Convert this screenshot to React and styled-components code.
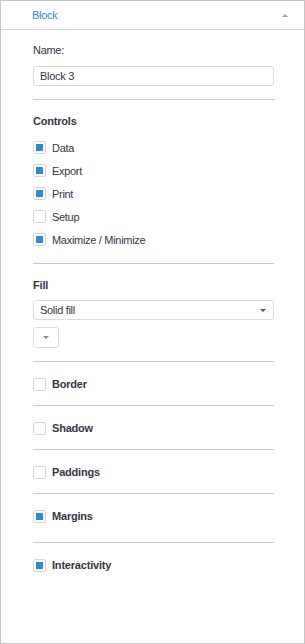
import React from "react";
import styled, { createGlobalStyle } from "styled-components";

const GlobalStyle = createGlobalStyle`
  html, body {
    margin: 0;
    padding: 0;
    background: #fff;
  }
  body {
    font-family: "Liberation Sans", Arial, sans-serif;
    font-size: 11px;
    letter-spacing: -0.3px;
    color: #363644;
  }
`;

const Panel = styled.div`
  width: 305px;
  height: 644px;
  box-sizing: border-box;
  border: 1px solid #c6c6c6;
  background: #fff;
  display: flex;
  flex-direction: column;
`;

const Header = styled.div`
  height: 28px;
  border-bottom: 1px solid #d9d9d9;
  display: flex;
  align-items: center;
  justify-content: space-between;
  padding: 0 16px 0 31px;
  color: #2b8ad3;
  font-size: 11px;
`;

const UpArrow = styled.span`
  width: 0;
  height: 0;
  border-left: 3px solid transparent;
  border-right: 3px solid transparent;
  border-bottom: 3px solid #9a9a9a;
`;

const Body = styled.div`
  padding: 13px 30px 0 32px;
  display: flex;
  flex-direction: column;
`;

const Label = styled.div`
  line-height: 14px;
  height: 14px;
`;

const Heading = styled.div`
  line-height: 14px;
  height: 14px;
  font-weight: bold;
  letter-spacing: -0.2px;
  margin-top: ${p => p.$top || 0}px;
`;

const TextBox = styled.div`
  margin-top: ${p => p.$top || 0}px;
  height: 18px;
  border: 1px solid #dcdcdc;
  border-radius: 3px;
  display: flex;
  align-items: center;
  justify-content: space-between;
  padding: 0 7px 0 6px;
`;

const Caret = styled.span`
  width: 0;
  height: 0;
  border-left: 3px solid transparent;
  border-right: 3px solid transparent;
  border-top: 3px solid #555;
`;

const SmallButton = styled.div`
  margin-top: 7px;
  width: 24px;
  height: 19px;
  border: 1px solid #dcdcdc;
  border-radius: 3px;
  display: flex;
  align-items: center;
  justify-content: center;
  ${Caret} {
    border-top-color: #8a8a8a;
  }
`;

const Divider = styled.div`
  height: 1px;
  background: #c8c8c8;
  margin-top: ${p => p.$top || 0}px;
`;

const CheckList = styled.div`
  margin-top: 8px;
  display: flex;
  flex-direction: column;
`;

const CheckRow = styled.div`
  height: 23px;
  display: flex;
  align-items: center;
  gap: 6px;
`;

const Box = styled.span`
  width: 11px;
  height: 11px;
  border: 1px solid #d6d6d6;
  border-radius: 2px;
  background: #fff;
  display: flex;
  align-items: center;
  justify-content: center;
  flex-shrink: 0;
  &::after {
    content: "";
    width: 7px;
    height: 7px;
    background: ${p => (p.$checked ? "#2a8bd0" : "transparent")};
  }
`;

const OptionRow = styled.div`
  display: flex;
  align-items: center;
  gap: 6px;
  padding: ${p => p.$pt}px 0 ${p => p.$pb}px;
  line-height: 14px;
  font-weight: bold;
  letter-spacing: -0.2px;
`;

const Check = ({ checked, children }) => (
  <CheckRow>
    <Box $checked={checked} />
    <span>{children}</span>
  </CheckRow>
);

const controls = [
  ["Data", true],
  ["Export", true],
  ["Print", true],
  ["Setup", false],
  ["Maximize / Minimize", true],
];

const options = [
  ["Border", false, 15, 14, true],
  ["Shadow", false, 15, 14, true],
  ["Paddings", false, 15, 14, true],
  ["Margins", true, 15, 19, true],
  ["Interactivity", true, 15, 14, false],
];

export default function App() {
  return (
    <>
      <GlobalStyle />
      <Panel>
        <Header>
          <span>Block</span>
          <UpArrow />
        </Header>
        <Body>
          <Label>Name:</Label>
          <TextBox $top={9}>Block 3</TextBox>
          <Divider $top={13} />
          <Heading $top={14}>Controls</Heading>
          <CheckList>
            {controls.map(([name, on]) => (
              <Check key={name} checked={on}>{name}</Check>
            ))}
          </CheckList>
          <Divider $top={12} />
          <Heading $top={14}>Fill</Heading>
          <TextBox $top={8}>
            <span>Solid fill</span>
            <Caret />
          </TextBox>
          <SmallButton>
            <Caret />
          </SmallButton>
          <Divider $top={13} />
          {options.map(([name, on, pt, pb, line]) => (
            <React.Fragment key={name}>
              <OptionRow $pt={pt} $pb={pb}>
                <Box $checked={on} />
                <span>{name}</span>
              </OptionRow>
              {line && <Divider />}
            </React.Fragment>
          ))}
        </Body>
      </Panel>
    </>
  );
}
